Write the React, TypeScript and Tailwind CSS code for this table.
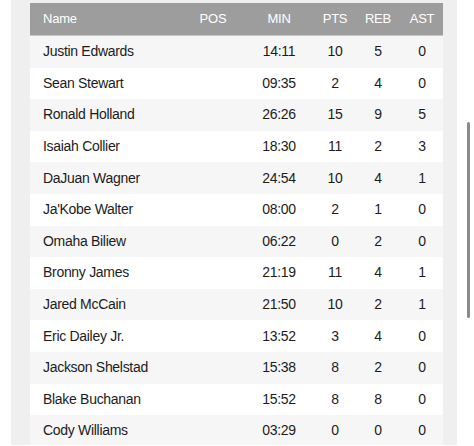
import React from "react";

const rows: [string, string, string, string, string][] = [
  ["Justin Edwards", "14:11", "10", "5", "0"],
  ["Sean Stewart", "09:35", "2", "4", "0"],
  ["Ronald Holland", "26:26", "15", "9", "5"],
  ["Isaiah Collier", "18:30", "11", "2", "3"],
  ["DaJuan Wagner", "24:54", "10", "4", "1"],
  ["Ja'Kobe Walter", "08:00", "2", "1", "0"],
  ["Omaha Biliew", "06:22", "0", "2", "0"],
  ["Bronny James", "21:19", "11", "4", "1"],
  ["Jared McCain", "21:50", "10", "2", "1"],
  ["Eric Dailey Jr.", "13:52", "3", "4", "0"],
  ["Jackson Shelstad", "15:38", "8", "2", "0"],
  ["Blake Buchanan", "15:52", "8", "8", "0"],
  ["Cody Williams", "03:29", "0", "0", "0"],
];

const grid = "grid grid-cols-[153px_60px_72px_40px_46px_42px] items-center";

export default function App() {
  return (
    <div
      className="relative w-[474px] h-[446px] bg-white overflow-hidden"
      style={{ fontFamily: '"Liberation Sans", Arial, sans-serif' }}
    >
      <div className="ml-[11px] w-[446px] h-[445px] bg-[#efefef] overflow-hidden pl-[19px] pt-[3px]">
        <div className="w-[413px]">
          <div className={`${grid} h-[33px] bg-[#9d9d9d] text-white text-[13px] tracking-[-0.2px] border-b border-[#c8c8c8]`}>
            <div className="pl-[13px]">Name</div>
            <div className="text-center">POS</div>
            <div className="text-center">MIN</div>
            <div className="text-center">PTS</div>
            <div className="text-center">REB</div>
            <div className="text-center">AST</div>
          </div>
          {rows.map((r, i) => (
            <div
              key={r[0]}
              className={`${grid} h-[31.6px] text-[14px] tracking-[-0.3px] text-[#1c1c1c] ${i % 2 === 0 ? "bg-[#f6f6f6]" : "bg-white"}`}
            >
              <div className="pl-[13px]">{r[0]}</div>
              <div className="text-center"></div>
              <div className="text-center">{r[1]}</div>
              <div className="text-center">{r[2]}</div>
              <div className="text-center">{r[3]}</div>
              <div className="text-center">{r[4]}</div>
            </div>
          ))}
        </div>
      </div>
      <div className="absolute left-[467px] top-[122px] w-[3px] h-[196px] rounded-full bg-[#8a8a8a]" />
    </div>
  );
}
